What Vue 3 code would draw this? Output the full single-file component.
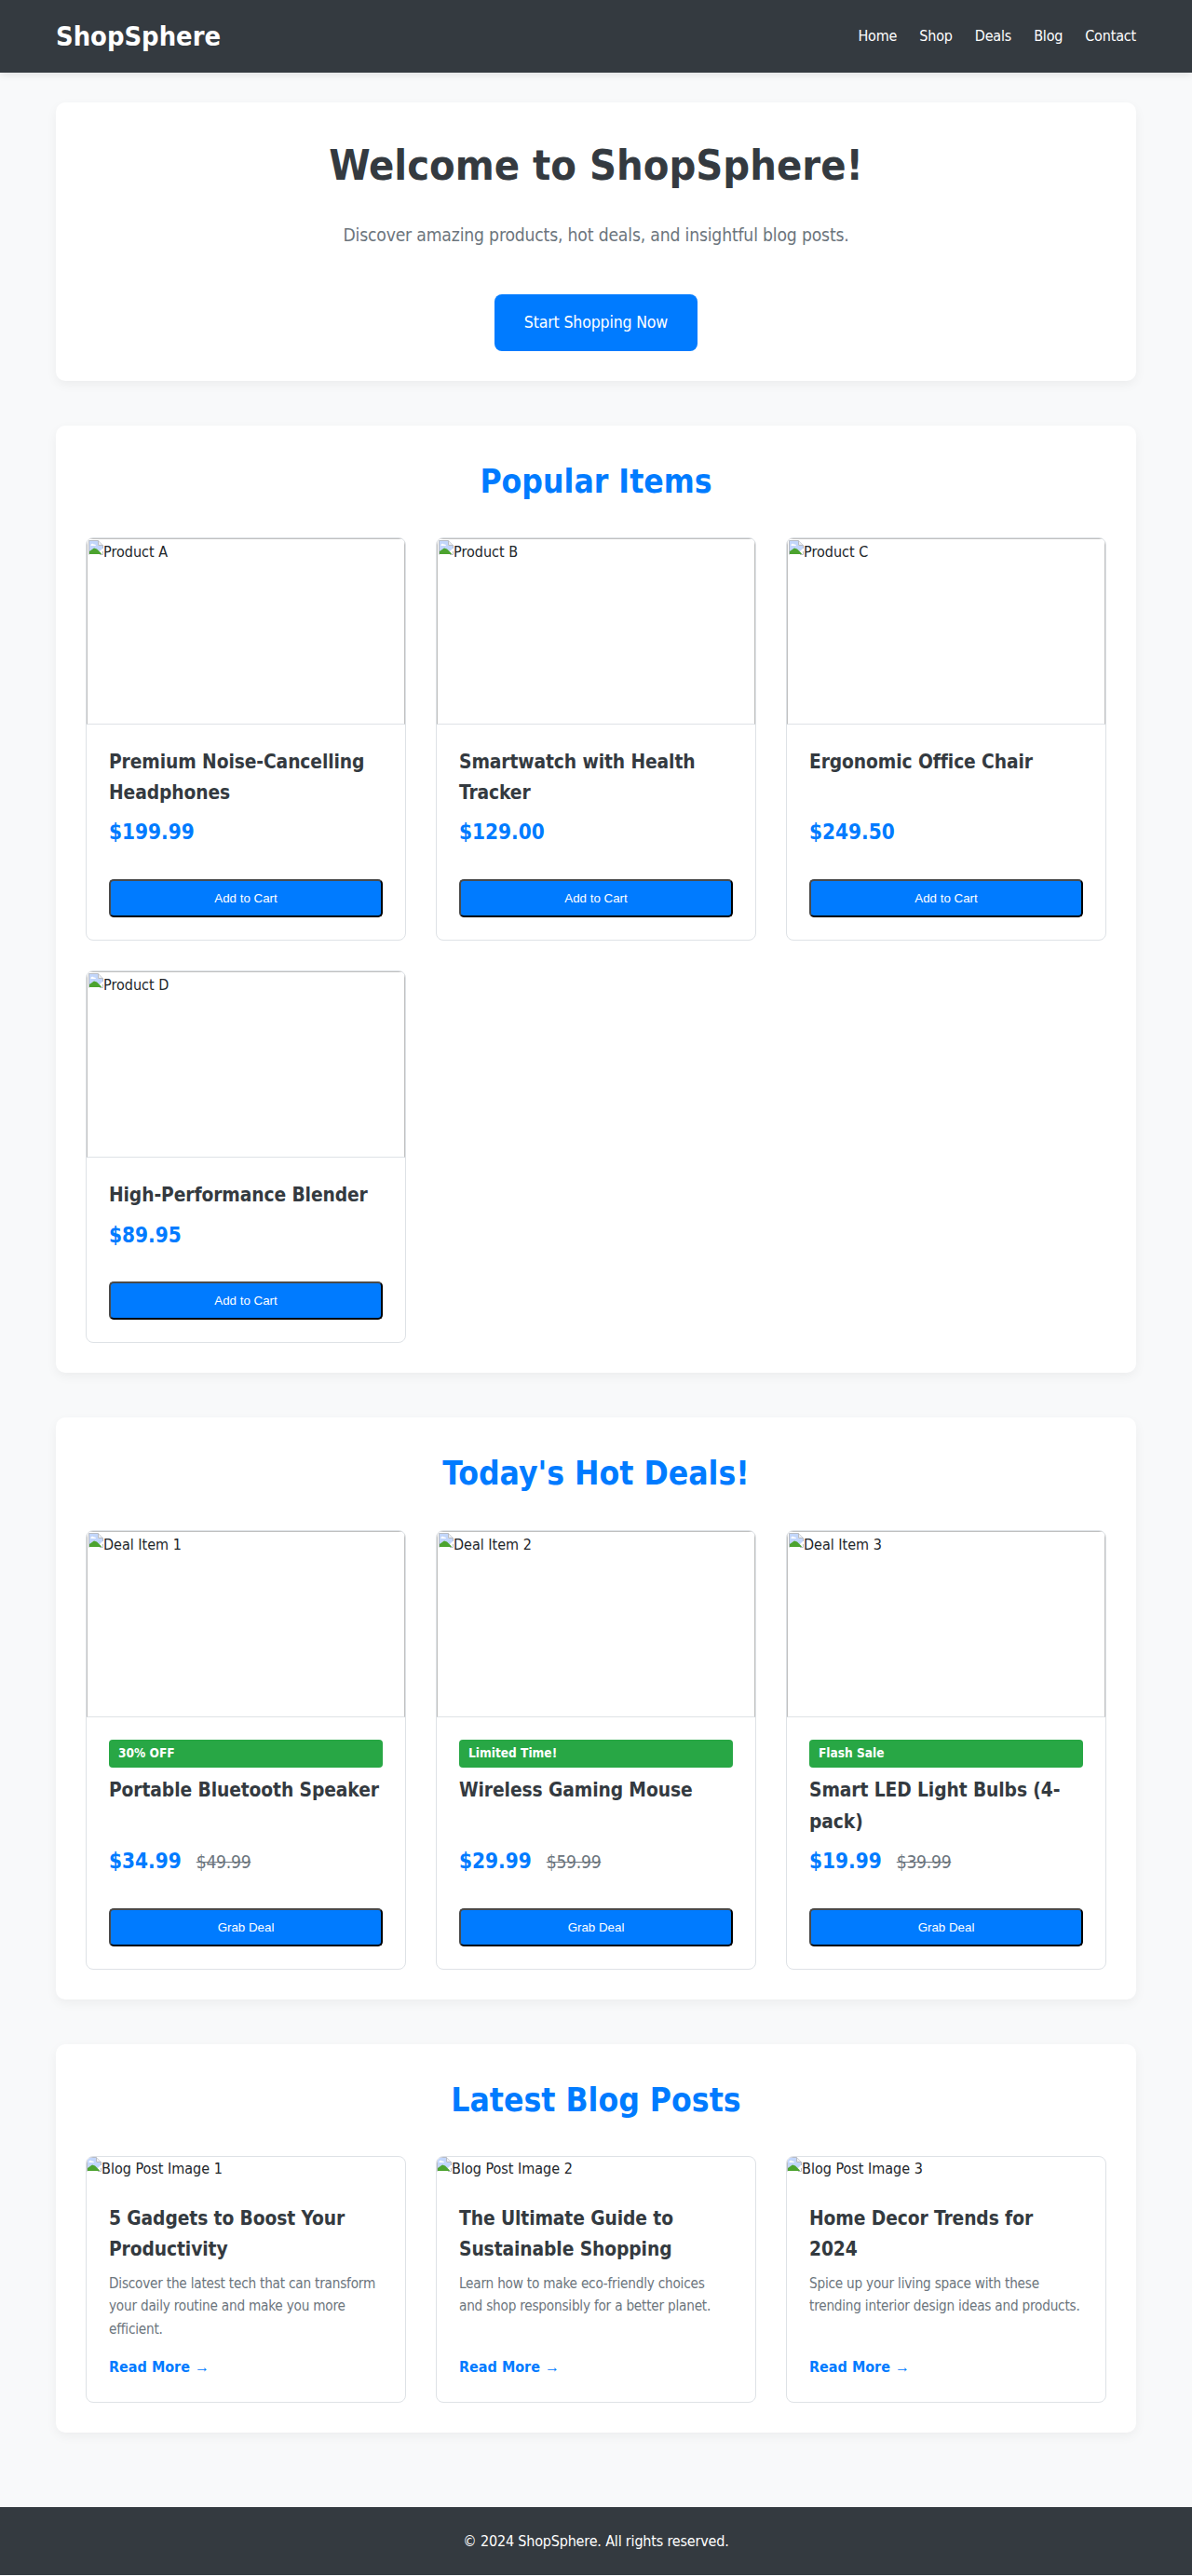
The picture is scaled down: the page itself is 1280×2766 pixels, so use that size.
<template>
  <div class="page">
    <svg class="icon-defs" width="0" height="0">
      <symbol id="broken-image" viewBox="0 0 16 16">
        <path d="M0.5 15.5V0.5H10.5L15.5 5.5V9" fill="#fff" stroke="#b8bcc4" />
        <path d="M10.5 0.5V5.5H15.5" fill="#eceef1" stroke="#b8bcc4" />
        <path d="M1 1H10V6H15V9L9 15H1Z" fill="#c2d6fb" />
        <path d="M2.5 5.5a1.8 1.8 0 0 1 3.4-.8a1.4 1.4 0 0 1 1.9 .8v.6H2.5Z" fill="#fff" />
        <path d="M1 15V12L6 8.5L9 9.5L14 14.5L13.5 15Z" fill="#4ca32f" />
        <path d="M12 15.5H15.5V12" fill="none" stroke="#b8bcc4" />
      </symbol>
    </svg>

    <header class="site-header">
      <div class="logo">ShopSphere</div>
      <nav class="nav">
        <a v-for="link in links" :key="link" href="#">{{ link }}</a>
      </nav>
    </header>

    <main class="main">
      <section class="panel hero">
        <h1>Welcome to ShopSphere!</h1>
        <p>Discover amazing products, hot deals, and insightful blog posts.</p>
        <a class="cta" href="#">Start Shopping Now</a>
      </section>

      <section class="panel">
        <h2>Popular Items</h2>
        <div class="grid">
          <article v-for="item in products" :key="item.alt" class="card">
            <div class="broken tall">
              <svg class="broken-icon" width="16" height="16"><use href="#broken-image" /></svg>{{ item.alt }}
            </div>
            <div class="card-body">
              <h3>{{ item.title }}</h3>
              <div class="price">{{ item.price }}</div>
              <button class="buy" type="button">Add to Cart</button>
            </div>
          </article>
        </div>
      </section>

      <section class="panel">
        <h2>Today's Hot Deals!</h2>
        <div class="grid">
          <article v-for="item in deals" :key="item.alt" class="card">
            <div class="broken tall">
              <svg class="broken-icon" width="16" height="16"><use href="#broken-image" /></svg>{{ item.alt }}
            </div>
            <div class="card-body">
              <div class="badge">{{ item.badge }}</div>
              <h3>{{ item.title }}</h3>
              <div class="price">{{ item.price }}<span class="old">{{ item.old }}</span></div>
              <button class="buy" type="button">Grab Deal</button>
            </div>
          </article>
        </div>
      </section>

      <section class="panel">
        <h2>Latest Blog Posts</h2>
        <div class="grid">
          <article v-for="post in posts" :key="post.alt" class="card">
            <div class="broken">
              <svg class="broken-icon" width="16" height="16"><use href="#broken-image" /></svg>{{ post.alt }}
            </div>
            <div class="card-body">
              <h3 class="post-title">{{ post.title }}</h3>
              <p class="excerpt">{{ post.text }}</p>
              <a class="more" href="#">Read More <span class="arrow">→</span></a>
            </div>
          </article>
        </div>
      </section>
    </main>

    <footer class="site-footer">© 2024 ShopSphere. All rights reserved.</footer>
  </div>
</template>

<script setup>
const links = ['Home', 'Shop', 'Deals', 'Blog', 'Contact']

const products = [
  { alt: 'Product A', title: 'Premium Noise-Cancelling Headphones', price: '$199.99' },
  { alt: 'Product B', title: 'Smartwatch with Health Tracker', price: '$129.00' },
  { alt: 'Product C', title: 'Ergonomic Office Chair', price: '$249.50' },
  { alt: 'Product D', title: 'High-Performance Blender', price: '$89.95' }
]

const deals = [
  { alt: 'Deal Item 1', badge: '30% OFF', title: 'Portable Bluetooth Speaker', price: '$34.99', old: '$49.99' },
  { alt: 'Deal Item 2', badge: 'Limited Time!', title: 'Wireless Gaming Mouse', price: '$29.99', old: '$59.99' },
  { alt: 'Deal Item 3', badge: 'Flash Sale', title: 'Smart LED Light Bulbs (4-pack)', price: '$19.99', old: '$39.99' }
]

const posts = [
  { alt: 'Blog Post Image 1', title: '5 Gadgets to Boost Your Productivity', text: 'Discover the latest tech that can transform your daily routine and make you more efficient.' },
  { alt: 'Blog Post Image 2', title: 'The Ultimate Guide to Sustainable Shopping', text: 'Learn how to make eco-friendly choices and shop responsibly for a better planet.' },
  { alt: 'Blog Post Image 3', title: 'Home Decor Trends for 2024', text: 'Spice up your living space with these trending interior design ideas and products.' }
]
</script>

<style>
body {
  margin: 0;
  background: #f8f9fa;
}
</style>

<style scoped>
.page {
  font-family: "DejaVu Sans Condensed", "Liberation Sans", sans-serif;
  font-size: 16px;
  line-height: 1.6;
  letter-spacing: -0.18px;
  color: #212529;
  background: #f8f9fa;
}

.icon-defs { position: absolute; }

.site-header {
  display: flex;
  align-items: center;
  justify-content: space-between;
  padding: 16px 60px;
  background: #343a40;
  color: #fff;
  box-shadow: 0 2px 8px rgba(0, 0, 0, 0.1);
}
.logo { font-size: 28.8px; font-weight: 700; letter-spacing: 0; }
.nav { display: flex; gap: 24px; }
.nav a { color: #fff; text-decoration: none; }

.main {
  display: flex;
  flex-direction: column;
  gap: 48px;
  padding: 32px 60px 80px;
}

.panel {
  padding: 32px;
  background: #fff;
  border-radius: 10px;
  box-shadow: 0 4px 12px rgba(0, 0, 0, 0.05);
}

.hero { text-align: center; }
.hero h1 {
  margin: 0 0 24px;
  font-size: 44.8px;
  font-weight: 700;
  letter-spacing: 0;
  color: #343a40;
}
.hero p {
  margin: 0 0 48px;
  font-size: 19.2px;
  color: #6c757d;
}
.cta {
  display: inline-block;
  vertical-align: top;
  padding: 16px 32px;
  font-size: 17.6px;
  color: #fff;
  background: #007bff;
  border-radius: 8px;
  text-decoration: none;
}

h2 {
  margin: 0 0 32px;
  font-size: 35.2px;
  font-weight: 700;
  letter-spacing: 0;
  text-align: center;
  color: #007bff;
}

.grid {
  display: grid;
  grid-template-columns: repeat(3, 1fr);
  gap: 32px;
}

.card {
  display: flex;
  flex-direction: column;
  background: #fff;
  border: 1px solid #dee2e6;
  border-radius: 8px;
  overflow: hidden;
}

.broken {
  line-height: 25.6px;
  letter-spacing: 0;
}
.broken-icon { vertical-align: top; }
.broken.tall {
  box-sizing: border-box;
  height: 200px;
  overflow: hidden;
  padding: 1px;
  border: 1px solid #c0c0c0;
  border-bottom-color: #dee2e6;
}

.card-body {
  display: flex;
  flex-direction: column;
  flex-grow: 1;
  padding: 24px;
}

.card h3 {
  flex-grow: 1;
  margin: 0 0 8px;
  font-size: 20.8px;
  font-weight: 700;
  letter-spacing: -0.1px;
  color: #343a40;
}

.badge {
  margin-bottom: 8px;
  padding: 4.4px 10px;
  font-size: 13.6px;
  font-weight: 700;
  letter-spacing: 0;
  color: #fff;
  background: #28a745;
  border-radius: 4px;
}

.price {
  margin-bottom: 32px;
  font-size: 22.4px;
  font-weight: 700;
  letter-spacing: 0;
  color: #007bff;
}
.old {
  margin-left: 16px;
  font-size: 19.2px;
  font-weight: 400;
  letter-spacing: -0.3px;
  color: #6c757d;
  text-decoration: line-through;
}

.buy {
  padding: 11px 0;
  font-family: "Liberation Sans", Arial, sans-serif;
  font-size: 13.33px;
  color: #fff;
  background: #007bff;
  border-width: 2px;
  border-style: solid;
  border-color: #4a4a4a #000 #000 #4a4a4a;
  border-radius: 5px;
}

.card h3.post-title { flex-grow: 0; }
.excerpt {
  flex-grow: 1;
  margin: 0 0 16px;
  padding-right: 3px;
  font-size: 15.2px;
  letter-spacing: -0.22px;
  color: #6c757d;
}
.more {
  font-weight: 700;
  letter-spacing: 0;
  color: #007bff;
  text-decoration: none;
}
.arrow {
  font-family: "Liberation Sans", sans-serif;
  font-weight: 700;
}

.site-footer {
  padding: 24px;
  text-align: center;
  color: #fff;
  background: #343a40;
}
</style>
